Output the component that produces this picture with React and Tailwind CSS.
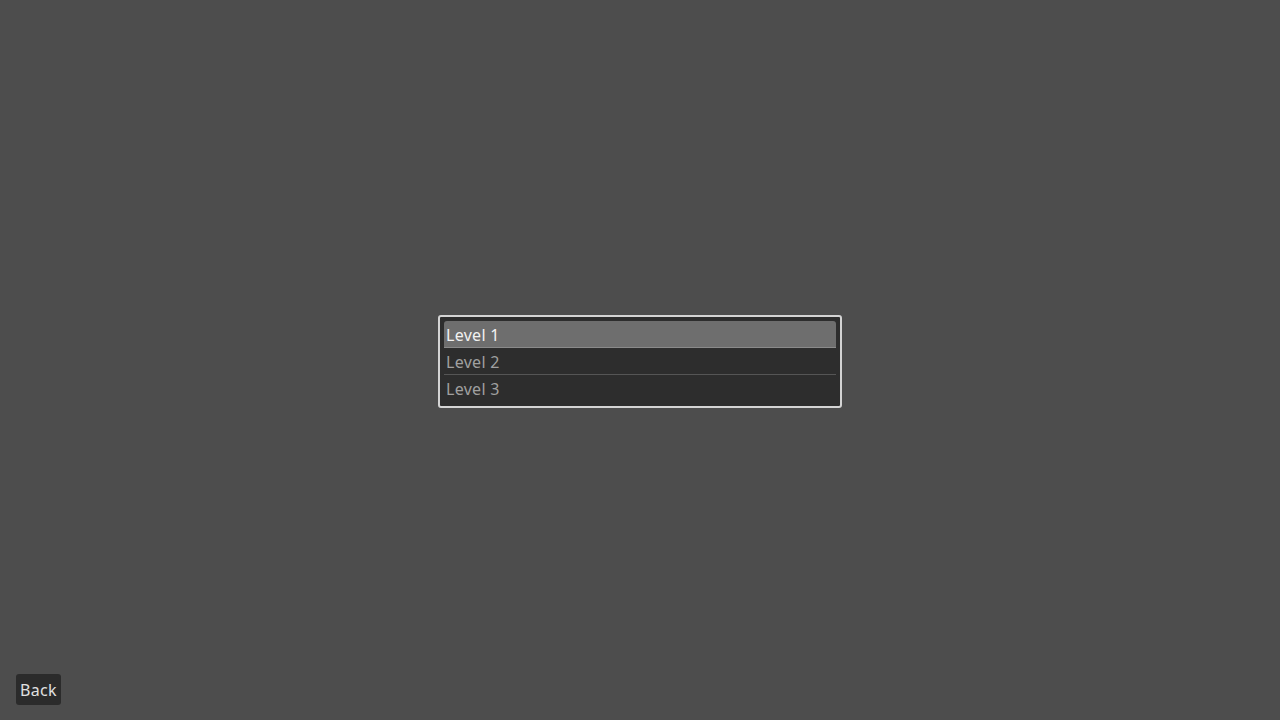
export default function App() {
  const items = ["Level 1", "Level 2", "Level 3"];
  return (
    <div
      className="relative w-screen h-screen bg-[#4d4d4d] flex items-center justify-center"
      style={{ fontFamily: '"Noto Sans", "Open Sans", sans-serif' }}
    >
      <div className="mt-[2px] w-[404px] h-[93px] border-2 border-[#d4d4d4] rounded-[3px] bg-[#2d2d2d] p-1 flex flex-col">
        {items.map((t, i) => (
          <div key={t} className="flex flex-col">
            <div
              className={
                i === 0
                  ? "h-[26px] pt-[2px] bg-[#6e6e6e] rounded-t-[3px] flex items-center px-[2px] text-[16px] tracking-[0.3px] font-normal text-[#f2f2f2] leading-none"
                  : "h-[26px] pt-[2px] flex items-center px-[2px] text-[16px] tracking-[0.3px] font-normal text-[#a0a0a0] leading-none"
              }
            >
              {t}
            </div>
            {i < 2 && (
              <div className={i === 0 ? "h-px bg-[#8a8a8a]" : "h-px bg-[#555555]"} />
            )}
          </div>
        ))}
      </div>
      <button className="absolute left-4 bottom-[15px] h-[31px] px-1 pt-px bg-[#2b2b2b] rounded-[3px] text-[16px] tracking-[0.3px] font-normal text-[#e0e0e0] leading-none flex items-center">
        Back
      </button>
    </div>
  );
}
